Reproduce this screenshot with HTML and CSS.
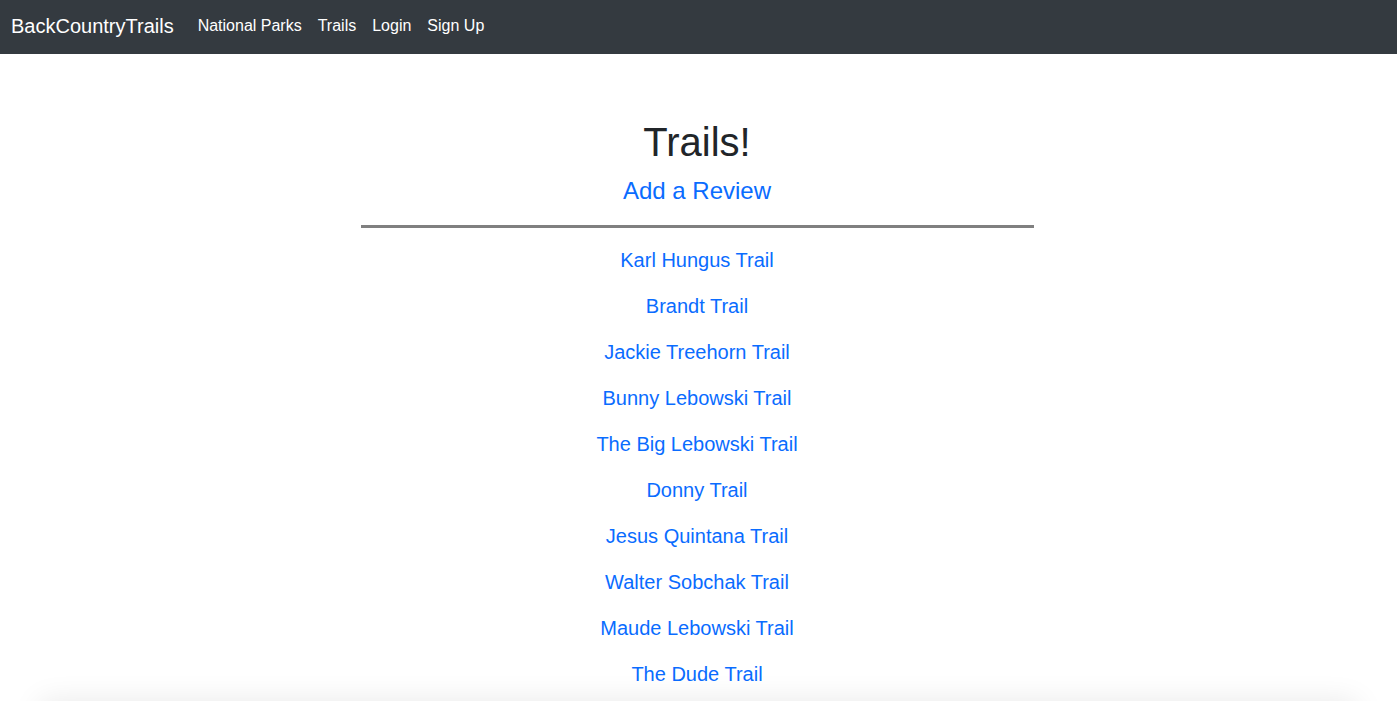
FILE: index.html
```html
<!DOCTYPE html>
<html lang="en">
<head>
<meta charset="utf-8">
<title>BackCountryTrails</title>
<link rel="stylesheet" href="styles.css">
</head>
<body>
<nav class="navbar">
  <a class="brand" href="#">BackCountryTrails</a>
  <ul class="nav-links">
    <li><a href="#">National Parks</a></li>
    <li><a href="#">Trails</a></li>
    <li><a href="#">Login</a></li>
    <li><a href="#">Sign Up</a></li>
  </ul>
</nav>
<main class="content">
  <h1 class="title">Trails!</h1>
  <a class="add-review" href="#">Add a Review</a>
  <hr class="divider">
  <ul class="trail-list">
    <li><a href="#">Karl Hungus Trail</a></li>
    <li><a href="#">Brandt Trail</a></li>
    <li><a href="#">Jackie Treehorn Trail</a></li>
    <li><a href="#">Bunny Lebowski Trail</a></li>
    <li><a href="#">The Big Lebowski Trail</a></li>
    <li><a href="#">Donny Trail</a></li>
    <li><a href="#">Jesus Quintana Trail</a></li>
    <li><a href="#">Walter Sobchak Trail</a></li>
    <li><a href="#">Maude Lebowski Trail</a></li>
    <li><a href="#">The Dude Trail</a></li>
  </ul>
</main>
<div class="footer-shadow"></div>
</body>
</html>
```

FILE: styles.css
```css
* { box-sizing: border-box; }
html, body {
  margin: 0;
  padding: 0;
}
body {
  font-family: "Liberation Sans", Arial, sans-serif;
  font-size: 16px;
  line-height: 1.5;
  color: #212529;
  background: #fff;
}
a { text-decoration: none; }

.navbar {
  display: flex;
  align-items: center;
  height: 54px;
  padding: 0 11px 2px;
  background: #343a40;
}
.brand {
  color: #fff;
  font-size: 20px;
  line-height: 30px;
  margin-right: 16px;
}
.nav-links {
  display: flex;
  list-style: none;
  margin: 0;
  padding: 0;
}
.nav-links a {
  display: block;
  padding: 8px 8px;
  color: #fff;
  font-size: 16px;
  line-height: 24px;
}

.content {
  display: flex;
  flex-direction: column;
  align-items: center;
  padding: 64px 3px 0 0;
}
.title {
  margin: 0 0 10px;
  font-size: 40px;
  font-weight: 400;
  line-height: 48px;
  color: #212529;
}
.add-review {
  color: #0a6cff;
  font-size: 24px;
  line-height: 29px;
}
.divider {
  width: 673px;
  height: 3px;
  margin: 20px 0 17px;
  border: 0;
  background: #808080;
}
.trail-list {
  list-style: none;
  margin: 0;
  padding: 0;
  text-align: center;
}
.trail-list li {
  margin-bottom: 16px;
  font-size: 20px;
  line-height: 30px;
}
.trail-list a { color: #0a6cff; }

.footer-shadow {
  position: fixed;
  top: 100%;
  left: 40px;
  right: 40px;
  height: 60px;
  background: #fff;
  box-shadow: 0 0 30px rgba(0, 0, 0, 0.09);
}
```
